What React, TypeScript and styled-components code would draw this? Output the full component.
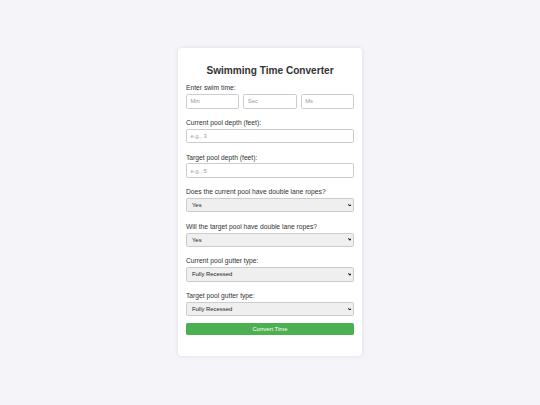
import styled, { createGlobalStyle } from 'styled-components';

const GlobalStyle = createGlobalStyle`
  html, body {
    margin: 0;
    padding: 0;
    background: #f4f4f9;
    font-family: "Liberation Sans", Arial, sans-serif;
  }
`;

const Page = styled.div`
  width: 540px;
  height: 405px;
  display: flex;
  justify-content: center;
  align-items: flex-start;
  padding-top: 47.7px;
  box-sizing: border-box;
`;

const Card = styled.div`
  width: 184.8px;
  box-sizing: border-box;
  padding: 8.4px;
  background: #ffffff;
  border-radius: 3.4px;
  box-shadow: 0 0 4px rgba(0, 0, 0, 0.1);
`;

const Title = styled.h2`
  margin: 8.9px 0 4.1px;
  font-size: 10.1px;
  line-height: 11.6px;
  font-weight: bold;
  text-align: center;
  color: #333;
`;

const Group = styled.div`
  display: flex;
  flex-direction: column;
  margin-bottom: 6.6px;
`;

const Label = styled.label`
  display: block;
  font-size: 6.72px;
  line-height: 7.7px;
  color: #333;
  margin: 3.8px 0 2.1px;
`;

const TimeRow = styled.div`
  display: grid;
  grid-template-columns: repeat(3, 1fr);
  gap: 4.2px;
`;

const Input = styled.input`
  display: block;
  width: 100%;
  height: 14.4px;
  box-sizing: border-box;
  margin: 0;
  padding: 0 3.4px;
  border: 0.5px solid #ccc;
  border-radius: 1.7px;
  font-family: "Liberation Sans", Arial, sans-serif;
  font-size: 5.9px;
  color: #333;
  background: #fff;
  outline: none;
  &::placeholder {
    color: #a0a0a0;
  }
`;

const SelectWrap = styled.div`
  position: relative;
  width: 100%;
  height: 14.4px;
`;

const Select = styled.select`
  appearance: none;
  -webkit-appearance: none;
  display: block;
  width: 100%;
  height: 14.4px;
  box-sizing: border-box;
  margin: 0;
  padding: 0 10px 0 5px;
  border: 0.5px solid #ccc;
  border-radius: 1.7px;
  font-family: "Liberation Sans", Arial, sans-serif;
  font-size: 5.9px;
  line-height: 13.4px;
  color: #222;
  background-color: #efefef;
  outline: none;
`;

const Chevron = styled.svg`
  position: absolute;
  right: 2.6px;
  top: 5.8px;
  width: 3.8px;
  height: 2.7px;
  pointer-events: none;
`;

const Button = styled.button`
  display: block;
  width: 100%;
  height: 12.7px;
  margin: 0;
  padding: 0;
  border: none;
  border-radius: 1.7px;
  background: #4caf50;
  color: #fff;
  font-family: "Liberation Sans", Arial, sans-serif;
  font-size: 5.9px;
  font-weight: normal;
  cursor: pointer;
`;

const Result = styled.div`
  margin-top: 12.6px;
`;

const yesNo = ['Yes', 'No'];
const gutters = ['Fully Recessed', 'Partially Recessed', 'Deck Level'];

const Dropdown = ({ options }: { options: string[] }) => (
  <SelectWrap>
    <Select>
      {options.map(o => (
        <option key={o}>{o}</option>
      ))}
    </Select>
    <Chevron viewBox="0 0 10 7">
      <path d="M1 1.2 L5 5.4 L9 1.2" fill="none" stroke="#1a1a1a" strokeWidth="2.8" />
    </Chevron>
  </SelectWrap>
);

export default function App() {
  return (
    <>
      <GlobalStyle />
      <Page>
        <Card>
          <Title>Swimming Time Converter</Title>
          <Group>
            <Label>Enter swim time:</Label>
            <TimeRow>
              <Input placeholder="Min" />
              <Input placeholder="Sec" />
              <Input placeholder="Ms" />
            </TimeRow>
          </Group>
          <Group>
            <Label>Current pool depth (feet):</Label>
            <Input placeholder="e.g., 3" />
          </Group>
          <Group>
            <Label>Target pool depth (feet):</Label>
            <Input placeholder="e.g., 5" />
          </Group>
          <Group>
            <Label>Does the current pool have double lane ropes?</Label>
            <Dropdown options={yesNo} />
          </Group>
          <Group>
            <Label>Will the target pool have double lane ropes?</Label>
            <Dropdown options={yesNo} />
          </Group>
          <Group>
            <Label>Current pool gutter type:</Label>
            <Dropdown options={gutters} />
          </Group>
          <Group>
            <Label>Target pool gutter type:</Label>
            <Dropdown options={gutters} />
          </Group>
          <Button>Convert Time</Button>
          <Result />
        </Card>
      </Page>
    </>
  );
}
